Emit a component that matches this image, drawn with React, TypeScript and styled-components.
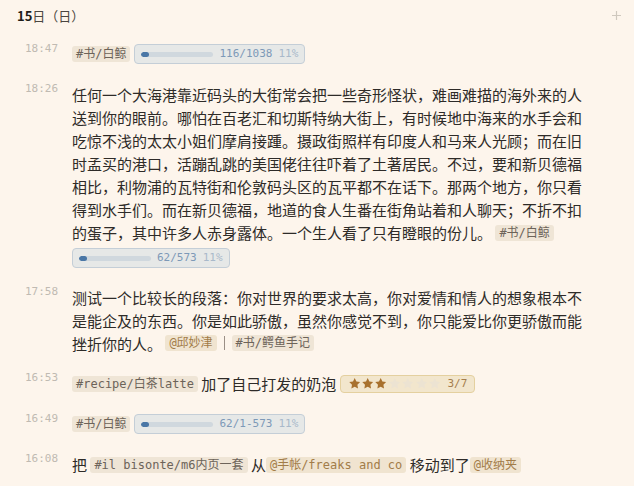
import styled, { createGlobalStyle } from "styled-components";

const GlobalStyle = createGlobalStyle`
  html, body {
    margin: 0;
    padding: 0;
    background: #fdf5ec;
  }
  body {
    font-family: "Noto Sans CJK SC", "Noto Sans", sans-serif;
    color: #2e2b28;
  }
`;

const MONO = `"DejaVu Sans Mono", "Noto Sans CJK SC", monospace`;

const Page = styled.div`
  width: 634px;
  min-height: 486px;
  background: #fdf5ec;
`;

const DayHeader = styled.div`
  display: flex;
  align-items: center;
  justify-content: space-between;
  height: 33.75px;
  padding: 0 13px 0 17px;
  box-sizing: border-box;
  padding-bottom: 1px;
`;

const DayTitle = styled.div`
  font-size: 13px;
  line-height: 18px;
  color: #4a4540;

  b {
    font-weight: 700;
    color: #1f1c19;
  }
`;

const AddButton = styled.span`
  display: flex;
  width: 9px;
  height: 9px;
  margin-top: -2px;
`;

const Entry = styled.div`
  display: flex;
  padding: 8.75px 0;
`;

const Time = styled.div`
  width: 47px;
  padding-left: 25px;
  flex-shrink: 0;
  font-family: ${MONO};
  font-size: 11px;
  line-height: 12px;
  color: #c0bab2;
`;

const Body = styled.div`
  width: 518px;
  font-size: 15px;
  line-height: 23px;
`;

const Tag = styled.span<{ $mention?: boolean }>`
  display: inline-block;
  vertical-align: top;
  margin-top: 3.5px;
  height: 16px;
  padding: 0 4px;
  border-radius: 3px;
  font-family: ${MONO};
  font-size: 12px;
  line-height: 16px;
  background: ${(p) => (p.$mention ? "#f0e4d0" : "#efe5d6")};
  color: ${(p) => (p.$mention ? "#a27c48" : "#6c6359")};
`;

const Divider = styled.span`
  display: inline-block;
  vertical-align: top;
  width: 1px;
  height: 14px;
  margin: 4.5px 7px 0 7px;
  background: #9a8f86;
`;

const ProgressBox = styled.span<{ $gap?: boolean }>`
  display: inline-flex;
  align-items: center;
  gap: 6px;
  vertical-align: top;
  margin-top: 1.5px;
  margin-left: ${(p) => (p.$gap ? "4px" : "0")};
  height: 20px;
  padding: 0 6px;
  box-sizing: border-box;
  border: 1px solid #c4ced7;
  border-radius: 4px;
  background: #e6e8e7;
  font-family: ${MONO};
  font-size: 11px;
  line-height: 18px;
`;

const Track = styled.span`
  display: block;
  width: 72px;
  height: 5px;
  border-radius: 3px;
  background: #d0d8de;
  overflow: hidden;
`;

const Fill = styled.span`
  display: block;
  height: 100%;
  border-radius: 3px;
  background: #4a77a6;
`;

const Count = styled.span`
  color: #7d99b7;
`;

const Percent = styled.span`
  color: #a9b9ca;
`;

const ProgressLine = styled.div`
  display: flex;
  margin-top: 4px;

  ${ProgressBox} {
    margin-top: 0;
  }
`;

const Rating = styled.span`
  display: inline-flex;
  align-items: center;
  vertical-align: top;
  margin-top: 2.5px;
  height: 18px;
  padding: 0 7px;
  box-sizing: border-box;
  border: 1px solid #e4d09f;
  border-radius: 4px;
  background: #f2e6cd;
`;

const Stars = styled.span`
  display: flex;
  margin-right: 6px;
`;

const RatingCount = styled.span`
  font-family: ${MONO};
  font-size: 11px;
  color: #a57e4d;
`;

const Star = ({ on }: { on: boolean }) => (
  <svg width="13.4" height="13" viewBox="0 0 24 24">
    <path
      d="M12 2l3.09 6.26L22 9.27l-5 4.87 1.18 6.88L12 17.77l-6.18 3.25L7 14.14 2 9.27l6.91-1.01L12 2z"
      fill={on ? "#a8712e" : "#ece3d2"}
    />
  </svg>
);

const Progress = ({ done, total, gap }: { done: string; total: number; gap?: boolean }) => {
  const pct = Math.round((parseInt(done, 10) / total) * 100);
  return (
    <ProgressBox $gap={gap}>
      <Track>
        <Fill style={{ width: `${Math.max(pct, 11)}%` }} />
      </Track>
      <Count>{done.includes("/") ? done : `${done}/${total}`}</Count>
      <Percent>11%</Percent>
    </ProgressBox>
  );
};

export default function App() {
  return (
    <Page>
      <GlobalStyle />
      <DayHeader>
        <DayTitle>
          <b>15</b>日（日）
        </DayTitle>
        <AddButton>
          <svg width="9" height="9" viewBox="0 0 9 9">
            <path d="M4.5 0v9M0 4.5h9" stroke="#cfc8be" strokeWidth="1.2" />
          </svg>
        </AddButton>
      </DayHeader>

      <Entry>
        <Time>18:47</Time>
        <Body>
          <Tag>#书/白鲸</Tag>
          <Progress done="116" total={1038} gap />
        </Body>
      </Entry>

      <Entry>
        <Time>18:26</Time>
        <Body>
          任何一个大海港靠近码头的大街常会把一些奇形怪状，难画难描的海外来的人送到你的眼前。哪怕在百老汇和切斯特纳大街上，有时候地中海来的水手会和吃惊不浅的太太小姐们摩肩接踵。摄政街照样有印度人和马来人光顾；而在旧时孟买的港口，活蹦乱跳的美国佬往往吓着了土著居民。不过，要和新贝德福相比，利物浦的瓦特街和伦敦码头区的瓦平都不在话下。那两个地方，你只看得到水手们。而在新贝德福，地道的食人生番在街角站着和人聊天；不折不扣的蛋子，其中许多人赤身露体。一个生人看了只有瞪眼的份儿。 <Tag>#书/白鲸</Tag>
          <ProgressLine>
            <Progress done="62" total={573} />
          </ProgressLine>
        </Body>
      </Entry>

      <Entry>
        <Time>17:58</Time>
        <Body>
          测试一个比较长的段落：你对世界的要求太高，你对爱情和情人的想象根本不是能企及的东西。你是如此骄傲，虽然你感觉不到，你只能爱比你更骄傲而能挫折你的人。 <Tag $mention>@邱妙津</Tag>
          <Divider />
          <Tag>#书/鳄鱼手记</Tag>
        </Body>
      </Entry>

      <Entry>
        <Time>16:53</Time>
        <Body>
          <Tag>#recipe/白茶latte</Tag> 加了自己打发的奶泡{" "}
          <Rating>
            <Stars>
              {[0, 1, 2, 3, 4, 5, 6].map((i) => (
                <Star key={i} on={i < 3} />
              ))}
            </Stars>
            <RatingCount>3/7</RatingCount>
          </Rating>
        </Body>
      </Entry>

      <Entry>
        <Time>16:49</Time>
        <Body>
          <Tag>#书/白鲸</Tag>
          <Progress done="62/1-573" total={573} gap />
        </Body>
      </Entry>

      <Entry>
        <Time>16:08</Time>
        <Body>
          把 <Tag>#il bisonte/m6内页一套</Tag> 从<Tag $mention>@手帐/freaks and co</Tag> 移动到了<Tag $mention>@收纳夹</Tag>
        </Body>
      </Entry>
    </Page>
  );
}
